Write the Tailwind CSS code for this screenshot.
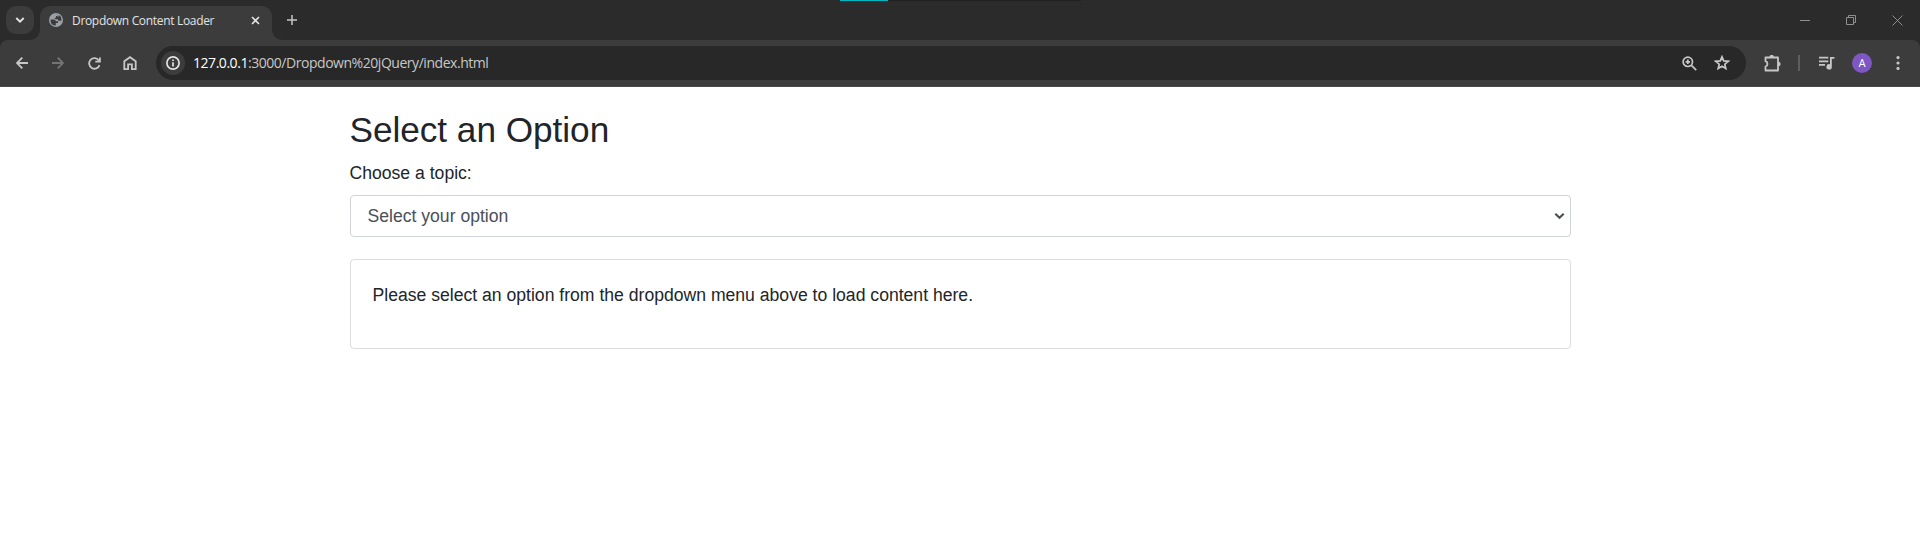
<!DOCTYPE html>
<html lang="en">
<head>
<meta charset="utf-8">
<title>Dropdown Content Loader</title>
<script src="https://cdn.jsdelivr.net/npm/@tailwindcss/browser@4"></script>
</head>
<body class="h-[533px] w-[1920px] overflow-hidden bg-white font-['Liberation_Sans',Arial,sans-serif] text-[17.6px] leading-[26.4px] text-[#212529]">
<header class="relative font-['Open_Sans','Noto_Sans',sans-serif]">
  <div class="absolute left-[840px] top-0 flex h-px w-[241px] bg-[#1f1f1f]"><div class="w-12 bg-[#00b7c3]"></div></div>
  <!-- Tab strip -->
  <div class="flex h-10 bg-[#2b2b2b] pl-[6px]">
    <button class="mt-[6px] flex size-7 items-center justify-center rounded-[10px] bg-[#3c3c3c]">
      <svg width="10" height="8" viewBox="0 0 10 8" fill="none" stroke="#e3e3e3" stroke-width="1.9"><path d="M1.3 2 5 5.7 8.7 2"/></svg>
    </button>
    <div class="relative ml-[6px] mt-[6px] flex h-[34px] w-[232px] items-start rounded-t-[10px] bg-[#3c3c3c] pl-[9px]">
      <svg class="absolute -left-[10px] bottom-0" width="10" height="10"><path d="M10 0V10H0A10 10 0 0 0 10 0Z" fill="#3c3c3c"/></svg>
      <svg class="absolute -right-[10px] bottom-0" width="10" height="10"><path d="M0 0V10H10A10 10 0 0 1 0 0Z" fill="#3c3c3c"/></svg>
      <svg class="mt-[7px]" width="14" height="14" viewBox="0 0 14 14"><circle cx="7" cy="7" r="7" fill="#9aa0a6"/><path d="M1.6 6.4H4.5Q6.5 6.4 7 8.3H9V10H6.8V12.6Q2 12.6 1.6 8ZM6 1.7H8.6V3H7V4.8H5.8V6.2H8.8L9.4 7.8H12.3Q13 3.5 9.8 2V3.4H8.5V1.5Z" fill="#3c3c3c"/></svg>
      <span class="ml-[9px] mt-[6px] w-[142px] whitespace-nowrap text-[12px] leading-[17px] tracking-[-0.32px] text-[#e3e3e3]">Dropdown Content Loader</span>
      <svg class="ml-[37px] mt-[10px]" width="9" height="9" viewBox="0 0 9 9" stroke="#e3e3e3" stroke-width="1.6"><path d="m1 1 7 7M8 1 1 8"/></svg>
    </div>
    <svg class="ml-[15px] mt-[15px]" width="10" height="10" viewBox="0 0 10 10" stroke="#c7c7c7" stroke-width="1.5"><path d="M5 0V10M0 5H10"/></svg>
    <div class="ml-auto mr-[17px] mt-[15px] flex gap-[36px] text-[#8f8f8f]">
      <svg width="10" height="11" viewBox="0 0 10 11"><path d="M0 5.5H10" stroke="currentColor"/></svg>
      <svg width="10" height="10" viewBox="0 0 10 10" fill="none" stroke="currentColor"><path d="M.5 2.5H7.5V9.5H.5ZM2.5 2.5V.5H9.5V7.5H7.5"/></svg>
      <svg width="11" height="11" viewBox="0 0 11 11" stroke="currentColor"><path d="m.5.5 10 10M10.5.5.5 10.5"/></svg>
    </div>
  </div>
  <!-- Toolbar -->
  <div class="bg-[#2b2b2b]">
    <div class="flex h-[47px] items-center rounded-t-[8px] border-b border-[#484848] bg-[#3c3c3c] pl-4 text-[#c7c7c7]">
      <svg width="12" height="12" viewBox="0 0 12 12" fill="none" stroke="currentColor" stroke-width="1.8"><path d="M12 6H1M6.3.6.9 6l5.4 5.4"/></svg>
      <svg class="ml-6 text-[#747474]" width="12" height="12" viewBox="0 0 12 12" fill="none" stroke="currentColor" stroke-width="1.8"><path d="M0 6H11M5.7.6 11.1 6l-5.4 5.4"/></svg>
      <svg class="ml-6" width="13" height="13" viewBox="0 0 13 13" fill="none" stroke="currentColor" stroke-width="1.8"><path d="M10.8 3.4A5.3 5.3 0 1 0 11.5 8.1M11.9.4V4.7H7.3"/></svg>
      <svg class="ml-[22px]" width="14" height="14" viewBox="0 0 14 14" fill="none" stroke="currentColor" stroke-width="1.8"><path d="M1.3 13.1V5.3L7 1.2l5.7 4.1V13.1H8.9V8.4H5.1V13.1Z"/></svg>
      <div class="ml-[19px] flex h-[34px] w-[1590px] items-center rounded-full bg-[#282828] pl-[5px]">
        <div class="flex size-6 items-center justify-center rounded-full bg-[#3c3c3c]">
          <svg width="14" height="14" viewBox="0 0 14 14" fill="none" stroke="#e3e3e3" stroke-width="1.7"><circle cx="7" cy="7" r="6.1"/><path d="M7 6.2V10.4M7 3.4V5"/></svg>
        </div>
        <span class="ml-2 whitespace-nowrap text-[14px] leading-5 tracking-[-0.46px] text-[#c7c7c7]"><span class="text-white">127.0.0.1</span>:3000/Dropdown%20jQuery/index.html</span>
        <svg class="ml-auto" width="15" height="15" viewBox="0 0 15 15" fill="none" stroke="currentColor" stroke-width="1.7"><circle cx="5.8" cy="5.8" r="4.7"/><path d="m9.2 9.2 5 5"/><path d="M5.8 3.6v4.4M3.6 5.8h4.4" stroke-width="1.8"/></svg>
        <svg class="ml-[17px] mr-[16px]" width="16" height="16" viewBox="0 0 16 16" fill="none" stroke="currentColor" stroke-width="1.7"><path d="m8 1.8 1.7 4.1 4.5.4-3.4 2.9 1 4.4L8 11.3l-3.8 2.3 1-4.4L1.8 6.3l4.5-.4Z"/></svg>
      </div>
      <svg class="ml-[18px]" width="17" height="17" viewBox="0 0 17 17" fill="none" stroke="currentColor" stroke-width="1.8"><path d="M1.5 2.5H14V15.5H1.5V11.7A2.9 2.9 0 0 0 1.5 6.2Z" stroke-linejoin="round"/><path d="M5.4 2.2A2.2 2.2 0 0 1 10 2.2ZM14.4 6.8A2.2 2.2 0 0 1 14.4 11.2Z" fill="currentColor" stroke="none"/></svg>
      <div class="ml-[17px] h-4 w-[2px] bg-[#5e5e5e]"></div>
      <svg class="ml-[19px]" width="16" height="14" viewBox="0 0 16 14"><path d="M0 1.7H9.3M0 5.3H9.3M0 8.8H6" stroke="currentColor" stroke-width="1.8"/><path d="M15.4 1V2.8H12.8V10.7A2.7 2.7 0 1 1 11 8.3V1Z" fill="currentColor"/></svg>
      <div class="ml-[17px] flex size-5 items-center justify-center rounded-full bg-[#7e57c2] font-['Roboto',sans-serif] text-[11px] leading-5 text-white"><span class="pt-px">A</span></div>
      <svg class="ml-6" width="4" height="14" viewBox="0 0 4 14" fill="currentColor"><circle cx="2" cy="1.6" r="1.6"/><circle cx="2" cy="7" r="1.6"/><circle cx="2" cy="12.4" r="1.6"/></svg>
    </div>
  </div>
</header>
<main class="ml-[350px] w-[1221px] pt-[22px]">
  <h2 class="mb-[8.8px] -ml-[0.5px] text-[35.2px] leading-[42.24px] tracking-[-0.03px]">Select an Option</h2>
  <label class="mb-[8.8px] -ml-[0.5px] block">Choose a topic:</label>
  <div class="flex h-[42px] items-center justify-between rounded-[4px] border border-[#ced4da] pl-[16.5px] pr-[5px] text-[#495057]">
    <span>Select your option</span>
    <svg width="11" height="8" viewBox="0 0 11 8" fill="none" stroke="#495057" stroke-width="2.2"><path d="M1.3 1.7 5.5 5.7 9.7 1.7"/></svg>
  </div>
  <section class="mt-[22px] h-[90px] rounded-[4px] border border-[#dddddd] p-[22px] pl-[21.5px]"><p>Please select an option from the dropdown menu above to load content here.</p></section>
</main>
</body>
</html>
